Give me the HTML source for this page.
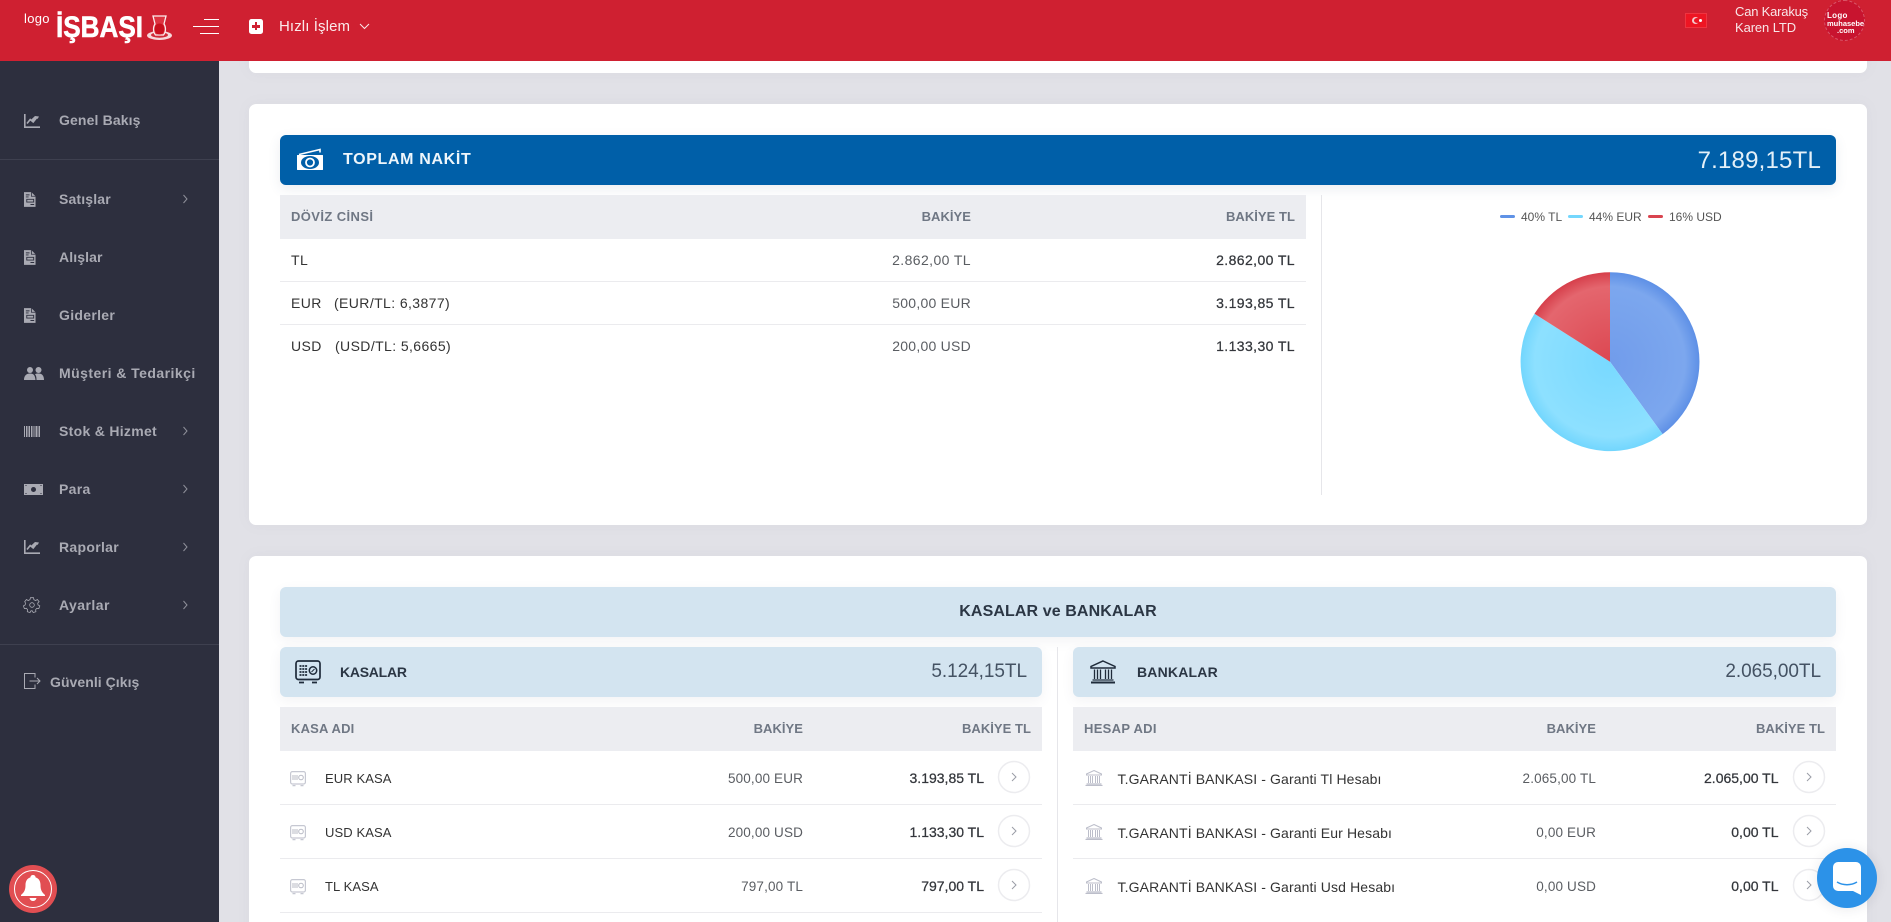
<!DOCTYPE html>
<html lang="tr"><head><meta charset="utf-8"><title>Logo İşbaşı</title>
<style>
html,body{margin:0;padding:0;width:1891px;height:922px;overflow:hidden;background:#e1e1e7}
body{position:relative;font-family:"Liberation Sans",Arial,sans-serif;color:#333}
.b{position:absolute}
.t{position:absolute;white-space:pre;line-height:20px;height:20px}
.side{left:59px;font-size:14px;font-weight:bold;color:#a9aab3;letter-spacing:.3px}
.th{font-size:13px;font-weight:bold;color:#6f7784;letter-spacing:.3px}
.th2{font-size:13px;font-weight:bold;color:#6f7784;letter-spacing:.05px}
.td{font-size:14px;color:#333;letter-spacing:.4px}
.tk{font-size:13px;color:#333;letter-spacing:.1px}
.v{font-size:14px;color:#5a5d62;letter-spacing:.25px}
.v2{font-size:13.5px;color:#5a5d62;letter-spacing:.15px}
.s{font-size:14px;color:#33363b;letter-spacing:.4px;-webkit-text-stroke:.25px #33363b}
.s2{font-size:14px;color:#33363b;letter-spacing:.0px;-webkit-text-stroke:.25px #33363b}
.card{position:absolute;background:#fff;border-radius:7px;left:249px;width:1618px;box-shadow:0 0 14px rgba(120,120,140,.06)}
.hd{position:absolute;background:#ecedf1}
.ln{position:absolute;height:1px;background:#ebebee}
.lb{position:absolute;background:#d3e4f0;border-radius:6px;box-shadow:0 4px 12px rgba(80,90,110,.07)}
svg{position:absolute;overflow:visible}
.ic{fill:none;stroke:#a9aab3}
.chv{color:#8f909a}
</style></head><body>
<svg width="0" height="0" style="position:absolute"><defs>
<symbol id="chev" viewBox="0 0 8 12"><polyline points="2.5,2 6,6 2.5,10" fill="none" stroke="currentColor" stroke-width="1"/></symbol>
<symbol id="doc" viewBox="0 0 13 16"><path d="M0 0h8l4.5 4.5V16H0z" fill="#a9aab3"/><path d="M2 3h4M2 5.200h3M3 7.800h7.500v3H3zM7 13.400h4" fill="none" stroke="#2d2f3e" stroke-width="1"/><path d="M8 0v4.500h4.500" fill="none" stroke="#2d2f3e" stroke-width=".9"/></symbol>
<symbol id="chart" viewBox="0 0 16 14"><path d="M.8 0v13.200H16" fill="none" stroke="#a9aab3" stroke-width="1.600"/><path d="M3 9.500l3.200-4 3 2.500 3-4.200 1.400 1.200L15 2.500 11 2z" fill="#a9aab3"/><path d="M3 9.500l3.200-4 3 2.500 4-5" fill="none" stroke="#a9aab3" stroke-width="1.600"/></symbol>
<symbol id="safe" viewBox="0 0 16 16"><rect x=".6" y=".6" width="14.800" height="12.400" rx="1.800" fill="none" stroke="#c6c8d2" stroke-width="1.200"/><path d="M3 4v5M5 4v5M7 4v5" stroke="#b9bbc6" stroke-width="1"/><circle cx="11" cy="6.500" r="2.300" fill="none" stroke="#b9bbc6"/><path d="M2.500 14.600h3M10.500 14.600h3" stroke="#c6c8d2" stroke-width="1.300"/></symbol>
<symbol id="bank" viewBox="0 0 18 16"><path d="M9 .5L16.500 4v1h-15V4z" fill="none" stroke="#bcbeca"/><path d="M3.500 6v7M5.500 6v7M7.500 6v7M10.500 6v7M12.500 6v7M14.500 6v7" stroke="#bcbeca"/><path d="M1.500 14h15M.5 15.500h17" stroke="#bcbeca" stroke-width="1.200"/></symbol>
<radialGradient id="gb" gradientUnits="userSpaceOnUse" cx="1610" cy="361.700" r="89.500"><stop offset="0" stop-color="#719ceb"/><stop offset=".84" stop-color="#7ca7ee"/><stop offset="1" stop-color="#5e90e6"/></radialGradient>
<radialGradient id="gc" gradientUnits="userSpaceOnUse" cx="1610" cy="361.700" r="89.500"><stop offset="0" stop-color="#78d9ff"/><stop offset=".84" stop-color="#8de0ff"/><stop offset="1" stop-color="#72d6fd"/></radialGradient>
<radialGradient id="gr" gradientUnits="userSpaceOnUse" cx="1610" cy="361.700" r="89.500"><stop offset="0" stop-color="#dc4751"/><stop offset=".84" stop-color="#e4666e"/><stop offset="1" stop-color="#d63f4b"/></radialGradient>
</defs></svg>

<!-- cards -->
<div class="card" style="top:40px;height:33px"></div>
<div class="card" style="top:104px;height:421px"></div>
<div class="card" style="top:556px;height:400px"></div>

<!-- sidebar -->
<div class="b" style="left:0;top:0;width:219px;height:922px;background:#2d2f3e"></div>
<div class="b" style="left:0;top:159px;width:219px;height:1px;background:#3e404f"></div>
<div class="b" style="left:0;top:644px;width:219px;height:1px;background:#3e404f"></div>

<svg style="left:24px;top:114px" width="16" height="14"><use href="#chart"/></svg>
<div class="t side" style="top:110px;letter-spacing:.13px">Genel Bakış</div>
<svg style="left:24px;top:192px" width="12" height="15"><use href="#doc"/></svg>
<div class="t side" style="top:189px;letter-spacing:.15px">Satışlar</div>
<svg style="left:24px;top:250px" width="12" height="15"><use href="#doc"/></svg>
<div class="t side" style="top:247px;letter-spacing:.1px">Alışlar</div>
<svg style="left:24px;top:308px" width="12" height="15"><use href="#doc"/></svg>
<div class="t side" style="top:305px">Giderler</div>
<svg style="left:24px;top:367px" width="20" height="13" viewBox="0 0 20 13"><circle cx="6" cy="3" r="3" fill="#a9aab3"/><circle cx="14.500" cy="3" r="3" fill="#a9aab3"/><path d="M0 13c0-4.500 2.500-6.500 6-6.500s5 1.500 5.500 6.500zM12.500 13c0-3-.5-4.500-1.500-5.700 1-.6 2-.8 3.500-.8 3.500 0 5.500 2 5.500 6.500z" fill="#a9aab3"/></svg>
<div class="t side" style="top:363px;letter-spacing:.45px">Müşteri &amp; Tedarikçi</div>
<svg style="left:24px;top:426px" width="16" height="11" viewBox="0 0 16 11"><path d="M.5 0v11M2.500 0v11M4 0v11M5.500 0v11M7.500 0v11M9 0v11M11 0v11M12.500 0v11M14 0v11M15.500 0v11" stroke="#a9aab3" stroke-width="1"/></svg>
<div class="t side" style="top:421px">Stok &amp; Hizmet</div>
<svg style="left:24px;top:484px" width="19" height="11" viewBox="0 0 19 11"><rect width="19" height="11" fill="#a9aab3"/><circle cx="9.500" cy="5.500" r="2.500" fill="#2d2f3e"/><path d="M1.500 1.500h1M16.500 1.500h1M1.500 9.500h1M16.500 9.500h1" stroke="#2d2f3e"/></svg>
<div class="t side" style="top:479px">Para</div>
<svg style="left:24px;top:540px" width="16" height="14"><use href="#chart"/></svg>
<div class="t side" style="top:537px">Raporlar</div>
<svg style="left:24px;top:597px" width="16" height="16" viewBox="0 0 16 16" class="ic"><path d="M6.500.7h3l.4 2 1.700.8 1.800-1 1.700 2.200-1.400 1.400.3 1.800 1.800 1-1 2.700-2-.3-1.200 1.400.3 2-2.700.8-1-1.700H7l-1 1.700-2.700-.8.300-2-1.200-1.400-2 .3-1-2.700 1.800-1 .3-1.800L.7 4.700l1.700-2.200 1.800 1 1.700-.8z" stroke-width=".8"/><circle cx="8" cy="8" r="2.300" stroke-width=".8"/></svg>
<div class="t side" style="top:595px;letter-spacing:.45px">Ayarlar</div>
<svg style="left:24px;top:673px" width="17" height="16" viewBox="0 0 17 16" class="ic"><path d="M11 4.500V.5H.5v15H11v-4M5.500 8H16M13 5l3 3-3 3" stroke-width="1"/></svg>
<div class="t side" style="left:50px;top:672px;letter-spacing:.05px">Güvenli Çıkış</div>
<svg class="chv" style="left:181px;top:193px" width="8" height="12"><use href="#chev"/></svg>
<svg class="chv" style="left:181px;top:425px" width="8" height="12"><use href="#chev"/></svg>
<svg class="chv" style="left:181px;top:483px" width="8" height="12"><use href="#chev"/></svg>
<svg class="chv" style="left:181px;top:541px" width="8" height="12"><use href="#chev"/></svg>
<svg class="chv" style="left:181px;top:599px" width="8" height="12"><use href="#chev"/></svg>

<!-- bell -->
<div class="b" style="left:9px;top:865px;width:48px;height:48px;border-radius:50%;background:#e14e52"></div>
<div class="b" style="left:13.500px;top:869.500px;width:36px;height:36px;border-radius:50%;border:1.500px solid #fff"></div>
<svg style="left:21px;top:875px" width="24" height="27" viewBox="0 0 24 27"><path d="M12 0c1.500 0 2.500 1 2.600 2.400C18 3.400 19.500 6.500 19.500 10c0 4 .8 7 4.500 10v1H0v-1c3.700-3 4.500-6 4.500-10 0-3.500 1.500-6.600 4.900-7.600C9.500 1 10.500 0 12 0z" fill="#fff"/><path d="M8.500 23h7c-.5 2-1.800 3-3.500 3s-3-1-3.500-3z" fill="#fff"/></svg>

<!-- header -->
<div class="b" style="left:0;top:0;width:1891px;height:61px;background:#cf2031"></div>
<div class="t" style="left:24px;top:9px;font-size:13px;color:#fff;letter-spacing:.3px">logo</div>
<div class="t" style="left:56px;top:14px;height:27px;line-height:27px;font-size:30px;font-weight:bold;color:#fff;letter-spacing:0;transform:scaleX(.87);transform-origin:left;-webkit-text-stroke:.6px #fff">İŞBAŞI</div>
<svg style="left:146px;top:14px" width="27" height="27" viewBox="0 0 27 27"><ellipse cx="13.500" cy="21.500" rx="12.500" ry="4.500" fill="#f6d8da"/><ellipse cx="13.500" cy="21" rx="8.500" ry="2.700" fill="#d12a38"/><path d="M7 2h13l-2 8c2 3 2 8-.5 11h-8c-2.500-3-2.500-8-.5-11z" fill="#dd3340" stroke="#fbeeee" stroke-width="1.300"/><ellipse cx="13.500" cy="15" rx="5" ry="5.500" fill="#c90f1d"/></svg>
<div class="b" style="left:204px;top:18.500px;width:15px;height:1.300px;background:#fff"></div>
<div class="b" style="left:193px;top:25.800px;width:26px;height:1.300px;background:#fff"></div>
<div class="b" style="left:200px;top:33px;width:19px;height:1.300px;background:#fff"></div>
<div class="b" style="left:248.500px;top:19px;width:14.500px;height:14.500px;background:#fff;border-radius:2.500px"></div>
<div class="b" style="left:252px;top:25px;width:8px;height:2.600px;background:#cf2031"></div>
<div class="b" style="left:254.700px;top:22.300px;width:2.600px;height:8px;background:#cf2031"></div>
<div class="t" style="left:279px;top:16.500px;font-size:15px;color:#fbe9ea;letter-spacing:.1px">Hızlı İşlem</div>
<svg style="left:359px;top:23px" width="11" height="7" viewBox="0 0 11 7"><polyline points="1,1 5.500,5.500 10,1" fill="none" stroke="#fbe9ea" stroke-width="1"/></svg>
<div class="b" style="left:1685px;top:13px;width:22px;height:15px;background:#ee1523;border:1px solid #f03440;box-sizing:border-box"></div>
<div class="b" style="left:1692px;top:17px;width:7px;height:7px;border-radius:50%;background:#f4c9cc"></div>
<div class="b" style="left:1694px;top:18px;width:6px;height:5px;border-radius:50%;background:#ee1523"></div>
<div class="b" style="left:1699px;top:19px;width:3px;height:3px;background:#fff;border-radius:50%"></div>
<div class="t" style="left:1735px;top:2px;font-size:13px;color:#f8e6e8;letter-spacing:-.2px">Can Karakuş</div>
<div class="t" style="left:1735px;top:18px;font-size:13px;color:#f8e6e8;letter-spacing:-.1px">Karen LTD</div>
<div class="b" style="left:1824px;top:0;width:41px;height:41px;border-radius:50%;background:#c8142f;border:1px dashed #d9566a;box-sizing:border-box"></div>
<div class="t" style="left:1827px;top:11px;height:9px;line-height:9px;font-size:8px;font-weight:bold;color:#fff;letter-spacing:.3px">Logo</div>
<div class="t" style="left:1827px;top:20px;height:9px;line-height:8px;font-size:7.500px;font-weight:bold;color:#fff">muhasebe</div>
<div class="t" style="left:1837px;top:27px;height:8px;line-height:8px;font-size:7.500px;font-weight:bold;color:#fff">.com</div>

<!-- toplam nakit -->
<div class="b" style="left:280px;top:135px;width:1556px;height:50px;background:#005fa8;border-radius:6px;box-shadow:0 4px 12px rgba(70,90,120,.1)"></div>
<svg style="left:296px;top:149px" width="28" height="22" viewBox="0 0 28 22"><path d="M3 5.500L24 .5v3" fill="none" stroke="#fff" stroke-width="1.600"/><rect x="1" y="6" width="26" height="15" rx=".5" fill="#fff"/><ellipse cx="14" cy="13.500" rx="9" ry="6.500" fill="#005fa8"/><circle cx="14" cy="13.500" r="4" fill="none" stroke="#fff" stroke-width="1.800"/></svg>
<div class="t" style="left:343px;top:150px;font-size:16px;font-weight:bold;color:#eef6fb;letter-spacing:.65px">TOPLAM NAKİT</div>
<div class="t" style="right:70px;top:151px;font-size:24px;color:#e4f0f8;letter-spacing:.2px">7.189,15TL</div>

<div class="hd" style="left:280px;top:195px;width:1026px;height:44px"></div>
<div class="t th" style="left:291px;top:207px;letter-spacing:.4px">DÖVİZ CİNSİ</div>
<div class="t th2" style="right:920px;top:207px">BAKİYE</div>
<div class="t th2" style="right:596px;top:207px">BAKİYE TL</div>
<div class="ln" style="left:280px;top:281px;width:1026px"></div>
<div class="ln" style="left:280px;top:324px;width:1026px"></div>
<div class="t td" style="left:291px;top:250px">TL</div>
<div class="t td" style="left:291px;top:293px">EUR</div><div class="t td" style="left:334px;top:293px">(EUR/TL: 6,3877)</div>
<div class="t td" style="left:291px;top:336px">USD</div><div class="t td" style="left:335px;top:336px">(USD/TL: 5,6665)</div>
<div class="t v" style="right:920px;top:250px;letter-spacing:.4px">2.862,00 TL</div>
<div class="t v" style="right:920px;top:293px">500,00 EUR</div>
<div class="t v" style="right:920px;top:336px">200,00 USD</div>
<div class="t s" style="right:596px;top:250px">2.862,00 TL</div>
<div class="t s" style="right:596px;top:293px">3.193,85 TL</div>
<div class="t s" style="right:596px;top:336px">1.133,30 TL</div>
<div class="b" style="left:1321px;top:195px;width:1px;height:300px;background:#e6e6ea"></div>

<!-- legend + pie -->
<div class="b" style="left:1500px;top:215px;width:15px;height:3px;border-radius:1.500px;background:#5f92e6"></div>
<div class="t" style="left:1521px;top:206.500px;font-size:12px;color:#555">40% TL</div>
<div class="b" style="left:1568px;top:215px;width:15px;height:3px;border-radius:1.500px;background:#74d7fd"></div>
<div class="t" style="left:1589px;top:206.500px;font-size:12px;color:#555">44% EUR</div>
<div class="b" style="left:1648px;top:215px;width:15px;height:3px;border-radius:1.500px;background:#d9444f"></div>
<div class="t" style="left:1669px;top:206.500px;font-size:12px;color:#555">16% USD</div>
<svg style="left:0;top:0" width="1891" height="922">
<path d="M1610 361.700V272.200A89.500 89.500 0 0 1 1662.600 434.100Z" fill="url(#gb)"/>
<path d="M1610 361.700L1662.600 434.100A89.500 89.500 0 0 1 1534.500 313.700Z" fill="url(#gc)"/>
<path d="M1610 361.700L1534.500 313.700A89.500 89.500 0 0 1 1610 272.200Z" fill="url(#gr)"/>
</svg>

<!-- kasalar ve bankalar -->
<div class="lb" style="left:280px;top:587px;width:1556px;height:50px"></div>
<div class="t" style="left:280px;width:1556px;top:602px;text-align:center;font-size:16px;font-weight:bold;color:#2b3644;letter-spacing:.1px">KASALAR ve BANKALAR</div>

<div class="lb" style="left:280px;top:647px;width:762px;height:50px"></div>
<svg style="left:295px;top:660px" width="26" height="24" viewBox="0 0 26 24"><rect x="1" y="1" width="24" height="18.500" rx="2.500" fill="none" stroke="#1f2b3a" stroke-width="1.700"/><path d="M4.500 6h8M4.500 9h8M4.500 12h8M4.500 15h8" stroke="#1f2b3a" stroke-width="1.700" stroke-dasharray="2 .8"/><circle cx="18" cy="10.500" r="3.700" fill="none" stroke="#1f2b3a" stroke-width="1.500"/><path d="M16.500 12l3-3" stroke="#1f2b3a"/><path d="M4 22.500h5M17 22.500h5" stroke="#1f2b3a" stroke-width="1.800"/></svg>
<div class="t" style="left:340px;top:662px;font-size:14px;font-weight:bold;color:#2b3644;letter-spacing:-.25px">KASALAR</div>
<div class="t" style="right:864px;top:662px;font-size:19px;color:#445263;letter-spacing:-.05px">5.124,15TL</div>
<div class="hd" style="left:280px;top:707px;width:762px;height:44px"></div>
<div class="t th" style="left:291px;top:719px;letter-spacing:.2px">KASA ADI</div>
<div class="t th2" style="right:1088px;top:719px">BAKİYE</div>
<div class="t th2" style="right:860px;top:719px">BAKİYE TL</div>
<div class="ln" style="left:280px;top:804px;width:762px"></div>
<div class="ln" style="left:280px;top:858px;width:762px"></div>
<div class="ln" style="left:280px;top:912px;width:762px"></div>
<svg style="left:290px;top:771px" width="16" height="16"><use href="#safe"/></svg>
<svg style="left:290px;top:825px" width="16" height="16"><use href="#safe"/></svg>
<svg style="left:290px;top:879px" width="16" height="16"><use href="#safe"/></svg>
<div class="t tk" style="left:325px;top:769px">EUR KASA</div>
<div class="t tk" style="left:325px;top:823px">USD KASA</div>
<div class="t tk" style="left:325px;top:877px">TL KASA</div>
<div class="t v2" style="right:1088px;top:769px">500,00 EUR</div>
<div class="t v2" style="right:1088px;top:823px">200,00 USD</div>
<div class="t v2" style="right:1088px;top:877px">797,00 TL</div>
<div class="t s2" style="right:907px;top:768px">3.193,85 TL</div>
<div class="t s2" style="right:907px;top:822px">1.133,30 TL</div>
<div class="t s2" style="right:907px;top:876px">797,00 TL</div>

<div class="b" style="left:1057px;top:647px;width:1px;height:275px;background:#e6e6ea"></div>

<div class="lb" style="left:1073px;top:647px;width:763px;height:50px"></div>
<svg style="left:1090px;top:660px" width="26" height="24" viewBox="0 0 26 24"><path d="M13 1L25 6.500V8H1V6.500z" fill="none" stroke="#1f2b3a" stroke-width="1.500"/><path d="M4.500 9.500V19M7.500 9.500V19M10.500 9.500V19M15.500 9.500V19M18.500 9.500V19M21.500 9.500V19" stroke="#1f2b3a" stroke-width="1.300"/><path d="M2.500 20h21" stroke="#1f2b3a" stroke-width="1.300"/><path d="M1 22.500h24" stroke="#1f2b3a" stroke-width="2"/></svg>
<div class="t" style="left:1137px;top:662px;font-size:14px;font-weight:bold;color:#2b3644;letter-spacing:.2px">BANKALAR</div>
<div class="t" style="right:70px;top:662px;font-size:19px;color:#445263;letter-spacing:-.05px">2.065,00TL</div>
<div class="hd" style="left:1073px;top:707px;width:763px;height:44px"></div>
<div class="t th" style="left:1084px;top:719px">HESAP ADI</div>
<div class="t th2" style="right:295px;top:719px">BAKİYE</div>
<div class="t th2" style="right:66px;top:719px">BAKİYE TL</div>
<div class="ln" style="left:1073px;top:804px;width:763px"></div>
<div class="ln" style="left:1073px;top:858px;width:763px"></div>
<svg style="left:1085px;top:770px" width="18" height="16"><use href="#bank"/></svg>
<svg style="left:1085px;top:824px" width="18" height="16"><use href="#bank"/></svg>
<svg style="left:1085px;top:878px" width="18" height="16"><use href="#bank"/></svg>
<div class="t td" style="left:1117.500px;top:768.500px;letter-spacing:.12px">T.GARANTİ BANKASI - Garanti Tl Hesabı</div>
<div class="t td" style="left:1117.500px;top:822.500px;letter-spacing:.12px">T.GARANTİ BANKASI - Garanti Eur Hesabı</div>
<div class="t td" style="left:1117.500px;top:876.500px;letter-spacing:.12px">T.GARANTİ BANKASI - Garanti Usd Hesabı</div>
<div class="t v2" style="right:295px;top:769px">2.065,00 TL</div>
<div class="t v2" style="right:295px;top:823px">0,00 EUR</div>
<div class="t v2" style="right:295px;top:877px">0,00 USD</div>
<div class="t s2" style="right:112.500px;top:768px">2.065,00 TL</div>
<div class="t s2" style="right:112.500px;top:822px">0,00 TL</div>
<div class="t s2" style="right:112.500px;top:876px">0,00 TL</div>

<!-- round arrows -->
<svg style="left:0;top:0;color:#9a9da6" width="1891" height="922" fill="none">
<g stroke="#ececef" stroke-width="1.500"><circle cx="1014" cy="777" r="15.500"/><circle cx="1014" cy="831" r="15.500"/><circle cx="1014" cy="885" r="15.500"/><circle cx="1809" cy="777" r="15.500"/><circle cx="1809" cy="831" r="15.500"/><circle cx="1809" cy="885" r="15.500"/></g>
<g stroke="#9a9da6" stroke-width="1"><path d="M1012 773l4 4-4 4M1012 827l4 4-4 4M1012 881l4 4-4 4M1807 773l4 4-4 4M1807 827l4 4-4 4M1807 881l4 4-4 4"/></g>
</svg>

<!-- chat -->
<div class="b" style="left:1817px;top:848px;width:60px;height:60px;border-radius:50%;background:#2c92e8;box-shadow:0 1px 12px rgba(40,40,60,.1)"></div>
<svg style="left:1833px;top:862px" width="28" height="33" viewBox="0 0 28 33"><path d="M5 0h18a5 5 0 0 1 5 5v28l-8-4H5a5 5 0 0 1-5-5V5a5 5 0 0 1 5-5z" fill="#fff"/><path d="M4 20c6 3.600 14 3.600 20 0" fill="none" stroke="#2c92e8" stroke-width="1.500"/></svg>
</body></html>
